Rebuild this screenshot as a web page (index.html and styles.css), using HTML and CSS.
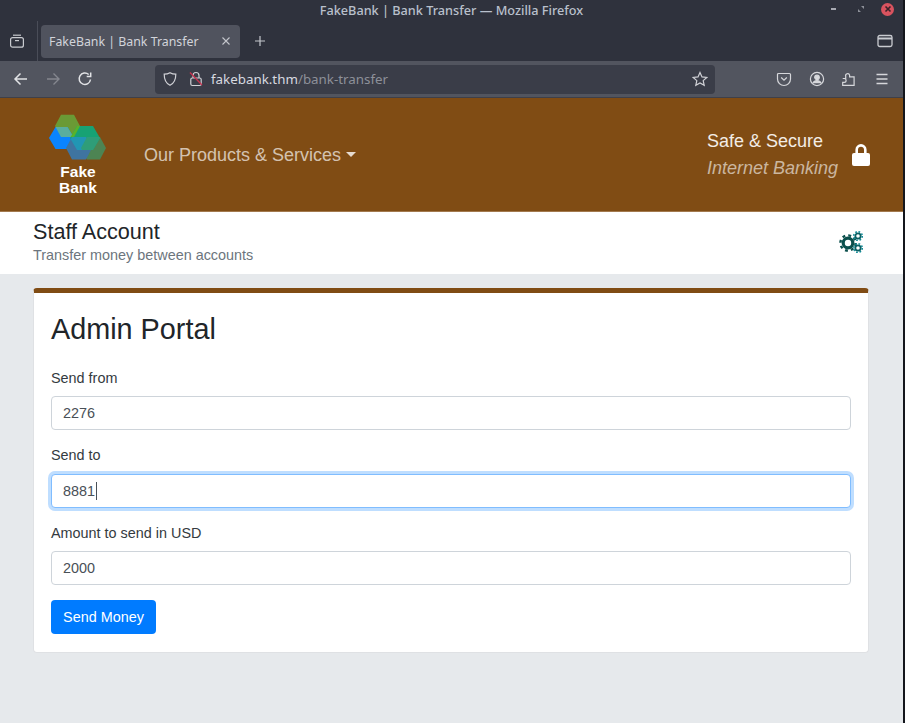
FILE: index.html
```html
<!DOCTYPE html>
<html lang="en">
<head>
<meta charset="utf-8">
<title>FakeBank | Bank Transfer</title>
<link rel="stylesheet" href="styles.css">
</head>
<body>
<div class="window">
  <div class="chrome-top">
    <div class="titlebar">
      <span class="title">FakeBank | Bank Transfer — Mozilla Firefox</span>
      <div class="window-controls">
        <span class="win-min"></span>
        <svg class="win-max" width="8" height="8" viewBox="0 0 8 8"><path d="M4 1h3v3zM4 7H1V4z" fill="#8d9099"/></svg>
        <span class="win-close"><svg width="12" height="12" viewBox="0 0 12 12"><path d="M3.500 3.500l5 5M8.500 3.500l-5 5" stroke="#3a2228" stroke-width="1.600"/></svg></span>
      </div>
    </div>
    <div class="tabrow">
      <div class="tab-side">
        <svg width="16" height="16" viewBox="0 0 16 16" fill="none" stroke="#c9cbd0" stroke-width="1.200"><path d="M4 2.200h8"/><rect x="1.600" y="4.600" width="12.800" height="9.600" rx="2"/><path d="M6 7.600h4"/></svg>
      </div>
      <div class="tab">
        <span class="tab-label">FakeBank | Bank Transfer</span>
        <svg width="10" height="10" viewBox="0 0 10 10"><path d="M1.500 1.500l7 7M8.500 1.500l-7 7" stroke="#c4c6cc" stroke-width="1.100"/></svg>
      </div>
      <svg class="tab-plus" width="12" height="12" viewBox="0 0 12 12"><path d="M6 1v10M1 6h10" stroke="#c4c6cc" stroke-width="1.200"/></svg>
      <svg class="tab-list" width="16" height="14" viewBox="0 0 16 14" fill="none" stroke="#c9cbd0" stroke-width="1.300"><rect x="1" y="1.500" width="14" height="11" rx="1.800"/><path d="M1 4.500h14" stroke-width="2"/></svg>
    </div>
  </div>
  <div class="navbar">
    <svg class="nav-back" width="16" height="16" viewBox="0 0 16 16" fill="none" stroke="#e2e3e6" stroke-width="1.500"><path d="M14 8H2M7.500 2.500L2 8l5.500 5.500"/></svg>
    <svg class="nav-fwd" width="16" height="16" viewBox="0 0 16 16" fill="none" stroke="#85878f" stroke-width="1.400"><path d="M2 8h12M8.500 2.500L14 8l-5.500 5.500"/></svg>
    <svg class="nav-reload" width="16" height="16" viewBox="0 0 16 16" fill="none" stroke="#e2e3e6" stroke-width="1.500"><path d="M13.500 8.500A5.700 5.700 0 1 1 11.700 3.500"/><path d="M13.700 1.500v4h-4" /></svg>
    <div class="urlbar">
      <svg class="url-shield" width="16" height="16" viewBox="0 0 16 16" fill="none" stroke="#d0d1d6" stroke-width="1.200"><path d="M8 1.700c2 1.200 3.800 1.500 5.800 1.500 0 5-1.500 9-5.800 11.100C3.700 12.200 2.200 8.200 2.200 3.200 4.200 3.200 6 2.900 8 1.700z"/></svg>
      <svg class="url-lock" width="14" height="16" viewBox="0 0 14 16" fill="none"><path d="M4 7V4.500a3 3 0 0 1 6 0V7" stroke="#d0d1d6" stroke-width="1.200"/><rect x="1.800" y="7" width="10.400" height="7.500" rx="1.500" stroke="#d0d1d6" stroke-width="1.200"/><path d="M1 1.500l12 12.500" stroke="#c8324f" stroke-width="1.300"/></svg>
      <span class="url-text">fakebank.thm<span class="url-path">/bank-transfer</span></span>
      <svg class="url-star" width="16" height="16" viewBox="0 0 16 16" fill="none" stroke="#d0d1d6" stroke-width="1.200"><path d="M8 1.500l2 4.400 4.800.5-3.600 3.200 1 4.700L8 11.900l-4.200 2.400 1-4.700L1.200 6.400 6 5.900z"/></svg>
    </div>
    <div class="nav-tools">
      <svg width="16" height="16" viewBox="0 0 16 16" fill="none" stroke="#d6d7db" stroke-width="1.200"><path d="M2.500 2.500h11a1 1 0 0 1 1 1V8a6.500 6.500 0 0 1-13 0V3.500a1 1 0 0 1 1-1z"/><path d="M5.200 6.500L8 9.200l2.800-2.700"/></svg>
      <svg width="16" height="16" viewBox="0 0 16 16" fill="none" stroke="#d6d7db" stroke-width="1.200"><circle cx="8" cy="8" r="6.600"/><circle cx="8" cy="6.300" r="2.300" fill="#d6d7db"/><path d="M3.800 12.200c1-2 2.500-2.600 4.200-2.600s3.200.6 4.200 2.600" fill="#d6d7db"/></svg>
      <svg width="16" height="16" viewBox="0 0 16 16" fill="none" stroke="#d6d7db" stroke-width="1.200"><path d="M1.700 7.500h3V5.300a2 2 0 0 1 3.900-1.200V5.800h4.500v8.500H1.700v-3h1.500a1.900 1.900 0 0 0 0-3.800z"/></svg>
      <svg width="16" height="16" viewBox="0 0 16 16" stroke="#d6d7db" stroke-width="1.300"><path d="M2.500 3.500h11M2.500 8h11M2.500 12.500h11"/></svg>
    </div>
  </div>
  <header class="site-header">
    <div class="brand">
      <svg class="brand-mark" width="58" height="46" viewBox="0 0 58 46">
        <defs>
          <clipPath id="clip-top"><polygon points="6,12 12,0.800 25,0.800 31,12 25,23 12,23"/></clipPath>
          <clipPath id="clip-right"><polygon points="21,24 28,12 44,12 51,24 44,36 28,36"/></clipPath>
          <clipPath id="clip-low"><polygon points="17,34 23,23 37,23 43,34 37,45.500 23,45.500"/></clipPath>
        </defs>
        <polygon points="6,12 12,0.800 25,0.800 31,12 25,23 12,23" fill="#6a9a35"/>
        <polygon points="32,34 38,23 51,23 57,34 51,45.500 38,45.500" fill="#4d8453"/>
        <polygon points="0,24 6.500,13 18.500,13 25,24 18.500,35 6.500,35" fill="#0a84ff"/>
        <polygon points="21,24 28,12 44,12 51,24 44,36 28,36" fill="#17a274"/>
        <polygon points="17,34 23,23 37,23 43,34 37,45.500 23,45.500" fill="#3f74a0"/>
        <polygon points="0,24 6.500,13 18.500,13 25,24 18.500,35 6.500,35" fill="#5aae9e" clip-path="url(#clip-top)"/>
        <polygon points="21,24 28,12 44,12 51,24 44,36 28,36" fill="#58b32a" clip-path="url(#clip-top)"/>
        <polygon points="21,24 28,12 44,12 51,24 44,36 28,36" fill="#2196b4" clip-path="url(#clip-low)"/>
        <polygon points="32,34 38,23 51,23 57,34 51,45.500 38,45.500" fill="#2f9d78" clip-path="url(#clip-right)"/>
      </svg>
      <div class="brand-name">Fake<br>Bank</div>
    </div>
    <a class="products" href="#">Our Products &amp; Services<span class="caret-down"></span></a>
    <div class="secure">
      <div class="secure-text">
        <div class="secure-line">Safe &amp; Secure</div>
        <div class="secure-sub">Internet Banking</div>
      </div>
      <svg class="secure-lock" width="18" height="22" viewBox="0 0 18 22"><path d="M4.700 10V5.700a4.300 4.300 0 0 1 8.600 0V10" fill="none" stroke="#fff" stroke-width="2.600"/><rect y="9" width="18" height="13" rx="2" fill="#fff"/></svg>
    </div>
  </header>
  <section class="page-head">
    <div>
      <h1 class="page-title">Staff Account</h1>
      <p class="page-sub">Transfer money between accounts</p>
    </div>
    <svg class="gears" width="24" height="22" viewBox="0 0 24 22">
      <g fill="none" stroke="#0b4f4c">
        <circle cx="9" cy="12" r="4.800" stroke-width="3.200"/>
        <circle cx="9" cy="12" r="7.600" stroke-width="2.400" stroke-dasharray="2.900 3.070"/>
        <circle cx="19" cy="5" r="2.700" stroke-width="1.800" stroke="#0c5f62"/>
        <circle cx="19" cy="5" r="4.300" stroke-width="1.600" stroke="#128a96" stroke-dasharray="1.700 1.670"/>
        <circle cx="19" cy="17" r="2.700" stroke-width="1.800" stroke="#0c5f62"/>
        <circle cx="19" cy="17" r="4.300" stroke-width="1.600" stroke="#128a96" stroke-dasharray="1.700 1.670"/>
      </g>
    </svg>
  </section>
  <main class="content">
    <form class="card">
      <h2 class="card-title">Admin Portal</h2>
      <div class="form-group">
        <label class="form-label" for="from">Send from</label>
        <input class="form-input" id="from" value="2276">
      </div>
      <div class="form-group">
        <label class="form-label" for="to">Send to</label>
        <div class="input-wrap">
          <input class="form-input is-focused" id="to" value="8881">
          <span class="text-caret"></span>
        </div>
      </div>
      <div class="form-group">
        <label class="form-label" for="amount">Amount to send in USD</label>
        <input class="form-input" id="amount" value="2000">
      </div>
      <button class="btn" type="button">Send Money</button>
    </form>
  </main>
</div>
</body>
</html>
```
FILE: styles.css
```css
* { box-sizing: border-box; }
html, body { margin: 0; height: 100%; }
body {
  background: #14161c;
  font-family: "Liberation Sans", Arial, sans-serif;
  overflow: hidden;
}
.window {
  width: 903px;
  height: 723px;
  display: flex;
  flex-direction: column;
  background: #e6e9ec;
}
.chrome-top {
  background: #2f323d;
  height: 61px;
  flex: none;
}
.titlebar {
  height: 20px;
  position: relative;
  text-align: center;
}
.title {
  display: block;
  padding-top: 2px;
  color: #b9c0cc;
  font: 500 12.700px/17px "Noto Sans", sans-serif;
}
.window-controls {
  position: absolute;
  top: 0;
  right: 9px;
  height: 18px;
  display: flex;
  align-items: center;
  gap: 16px;
}
.win-min { width: 5px; height: 2px; margin-right: 5px; background: #a8aab2; }
.win-max { display: block; }
.win-close {
  width: 13px;
  height: 13px;
  border-radius: 50%;
  background: #d9535f;
  display: flex;
  align-items: center;
  justify-content: center;
}
.tabrow {
  height: 41px;
  display: flex;
  align-items: center;
  padding-top: 1px;
}
.tab-side {
  width: 38px;
  height: 40px;
  margin-top: -1px;
  padding-left: 9px;
  display: flex;
  align-items: center;
  border-right: 1px solid #4a4d58;
}
.tab {
  width: 199px;
  height: 33px;
  margin-left: 3px;
  padding: 0 9px 0 8px;
  border-radius: 4px;
  background: #50535e;
  display: flex;
  align-items: center;
  justify-content: space-between;
}
.tab-label {
  color: #d2d4da;
  font: 400 12.350px/17px "Noto Sans", sans-serif;
}
.tab-plus { margin-left: 14px; }
.tab-list { margin-left: auto; margin-right: 10px; }
.navbar {
  height: 37px;
  flex: none;
  background: #52555f;
  display: flex;
  align-items: center;
  border-bottom: 1px solid #3f4049;
  padding-left: 13px;
}
.nav-fwd { margin-left: 16px; }
.nav-reload { margin-left: 16px; }
.urlbar {
  width: 560px;
  height: 29px;
  margin-left: 62px;
  padding: 0 6px 0 7px;
  border-radius: 4px;
  background: #3a3d48;
  display: flex;
  align-items: center;
}
.url-lock { margin-left: 11px; }
.url-text {
  margin-left: 8px;
  color: #d8dae0;
  font: 400 13.350px/18px "Noto Sans", sans-serif;
}
.url-path { color: #8d9099; }
.url-star { margin-left: auto; margin-right: 1px; }
.nav-tools {
  display: flex;
  align-items: center;
  gap: 16.500px;
  margin-left: 61px;
}
.site-header {
  height: 114px;
  flex: none;
  background: #804c14;
  display: flex;
  align-items: center;
  padding: 0 33px 0 49px;
  border-bottom: 1px solid #a37a4e;
}
.brand {
  width: 58px;
  display: flex;
  flex-direction: column;
  align-items: center;
  padding-top: 1px;
}
.brand-mark { display: block; }
.brand-name {
  margin-top: 4px;
  color: #fff;
  font-size: 15.500px;
  font-weight: 700;
  line-height: 16px;
  text-align: center;
}
.products {
  margin-left: 37px;
  padding-top: 2px;
  color: rgba(255, 255, 255, .68);
  font-size: 18px;
  line-height: 27px;
  text-decoration: none;
  display: flex;
  align-items: center;
}
.caret-down {
  margin-left: 5px;
  margin-top: -2px;
  border-top: 5px solid rgba(255, 255, 255, .8);
  border-left: 5px solid transparent;
  border-right: 5px solid transparent;
}
.secure {
  margin-left: auto;
  display: flex;
  align-items: center;
}
.secure-text { line-height: 27px; font-size: 18px; }
.secure-line { color: #f3ede6; }
.secure-sub { color: rgba(255, 255, 255, .6); font-style: italic; }
.secure-lock { margin-left: 14px; display: block; }
.page-head {
  height: 62px;
  flex: none;
  background: #fff;
  display: flex;
  align-items: center;
  justify-content: space-between;
  padding: 0 40px 2px 33px;
}
.page-title {
  margin: 0;
  color: #212529;
  font-size: 21.600px;
  font-weight: 400;
  line-height: 26px;
}
.page-sub {
  margin: 0;
  color: #6c757d;
  font-size: 14.400px;
  line-height: 21px;
}
.gears { display: block; }
.content { padding: 14px 34px 0 33px; }
.card {
  height: 365px;
  background: #fff;
  border: 1px solid #dfe1e4;
  border-top: 5px solid #804c14;
  border-radius: 4px;
  padding: 19px 17px 0;
}
.card-title {
  margin: 0 0 21.340px;
  color: #212529;
  font-size: 28.800px;
  font-weight: 400;
  line-height: 34.560px;
}
.form-group { margin-bottom: 14.800px; }
.form-label {
  display: block;
  margin-bottom: 6.800px;
  color: #343a40;
  font-size: 14.400px;
  line-height: 21.600px;
}
.form-input {
  display: block;
  width: 100%;
  height: 34.200px;
  padding: 0 11px;
  color: #495057;
  background: #fff;
  border: 1px solid #ced4da;
  border-radius: 4px;
  font: 14.400px/21.600px "Liberation Sans", Arial, sans-serif;
  outline: none;
}
.form-input.is-focused {
  border-color: #80bdff;
  box-shadow: 0 0 0 3px rgba(0, 123, 255, .25);
}
.input-wrap { position: relative; }
.text-caret {
  position: absolute;
  left: 45px;
  top: 8px;
  width: 1px;
  height: 18px;
  background: #495057;
}
.btn {
  display: block;
  width: 105px;
  height: 34.200px;
  padding: 1px 0 0;
  color: #fff;
  background: #007bff;
  border: 0;
  border-radius: 4px;
  font: 14.400px/21.600px "Liberation Sans", Arial, sans-serif;
}
```
